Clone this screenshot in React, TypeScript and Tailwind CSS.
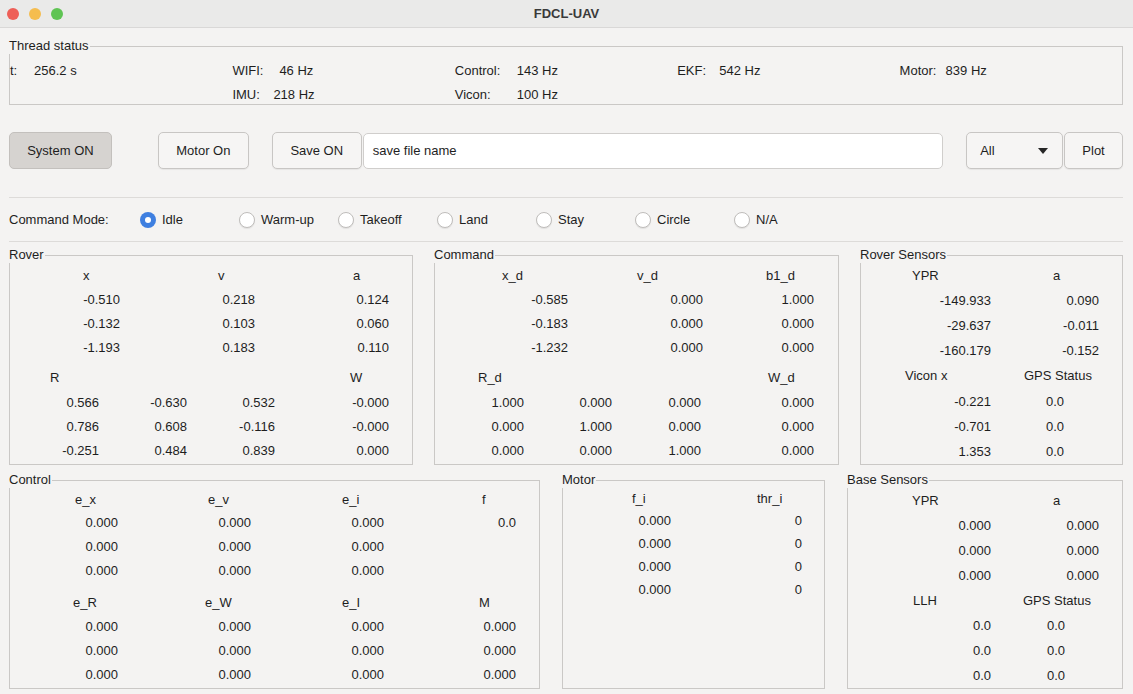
import React from 'react';

type Cell = [string, string];

function Row({ h, className = '', cells }: { h: string; className?: string; cells: Cell[] }) {
  return (
    <div className={`flex items-center ${h} ${className}`}>
      {cells.map(([c, t], i) => (
        <span key={i} className={c}>
          {t}
        </span>
      ))}
    </div>
  );
}

function Group({ title, className, children }: { title: string; className: string; children?: React.ReactNode }) {
  return (
    <fieldset className={`border border-[#cac8c6] min-w-0 ${className}`}>
      <legend className="text-[13px] leading-[16px] -ml-[1px] pr-[1px]">{title}</legend>
      <div className="pt-[1px]">{children}</div>
    </fieldset>
  );
}

function Radio({ label, checked }: { label: string; checked?: boolean }) {
  return (
    <div className="w-[99px] flex items-center gap-[6px]">
      {checked ? (
        <span className="w-[16px] h-[16px] rounded-full bg-[#3e7fe0] flex items-center justify-center">
          <span className="w-[6px] h-[6px] rounded-full bg-white" />
        </span>
      ) : (
        <span className="w-[16px] h-[16px] rounded-full bg-white border border-[#bfbdbb] shadow-[0_1px_1px_rgba(0,0,0,0.08)]" />
      )}
      <span>{label}</span>
    </div>
  );
}

const btn =
  'h-[37px] rounded-[5px] border border-[#c8c6c4] bg-[#f6f5f4] shadow-[0_1px_1px_rgba(0,0,0,0.06)] flex items-center justify-center';

export default function App() {
  return (
    <div className="w-[1133px] h-[694px] overflow-hidden bg-[#f4f3f2] text-[#1e1e1e] text-[13px] font-['Liberation_Sans',Arial,sans-serif]">
      {/* title bar */}
      <div className="h-[28px] grid grid-cols-[1fr_auto_1fr] items-center bg-[#eaeae9] border-b border-[#d9d8d7]">
        <div className="flex items-center gap-[10px] pl-[7px]">
          <span className="w-[12px] h-[12px] rounded-full bg-[#ee5f57]" />
          <span className="w-[12px] h-[12px] rounded-full bg-[#f5bd4f]" />
          <span className="w-[12px] h-[12px] rounded-full bg-[#5fc453]" />
        </div>
        <div className="font-bold text-[#3a3a3a]">FDCL-UAV</div>
        <div />
      </div>

      <div className="pl-[9px] pr-[10px] pt-[10px]">
        {/* thread status */}
        <Group title="Thread status" className="w-full">
          <div className="grid grid-cols-5 auto-rows-[18px] gap-y-[6px] pt-[7px] items-center">
            <div className="flex"><span className="w-[24px]">t:</span><span>256.2 s</span></div>
            <div className="flex"><span className="w-[41px]">WIFI:</span><span className="pl-[6px]">46 Hz</span></div>
            <div className="flex"><span className="w-[62px]">Control:</span><span>143 Hz</span></div>
            <div className="flex"><span className="w-[42px]">EKF:</span><span>542 Hz</span></div>
            <div className="flex"><span className="w-[46px]">Motor:</span><span>839 Hz</span></div>
            <div />
            <div className="flex"><span className="w-[41px]">IMU:</span><span>218 Hz</span></div>
            <div className="flex"><span className="w-[62px]">Vicon:</span><span>100 Hz</span></div>
            <div />
            <div />
          </div>
        </Group>

        {/* buttons */}
        <div className="mt-[27px] flex items-center">
          <div className="w-[103px] h-[37px] rounded-[5px] border border-[#c3c0bd] bg-[#d6d3d0] flex items-center justify-center">
            System ON
          </div>
          <div className={`${btn} w-[91px] ml-[46px]`}>Motor On</div>
          <div className={`${btn} w-[90px] ml-[23px]`}>Save ON</div>
          <div className="ml-[1px] w-[581px] h-[36px] rounded-[5px] border border-[#d0cecc] bg-white flex items-center pl-[9px]">
            save file name
          </div>
          <div className={`${btn} w-[97px] ml-[23px] !justify-between pl-[13px] pr-[14px]`}>
            <span>All</span>
            <svg width="10" height="6" viewBox="0 0 10 6">
              <path d="M0 0h10L5 6z" fill="#262626" />
            </svg>
          </div>
          <div className={`${btn} w-[59px] ml-[1px]`}>Plot</div>
        </div>

        <div className="mt-[28px] border-t border-[#dddbd9]" />

        {/* command mode */}
        <div className="h-[43px] flex items-center">
          <span className="w-[131px]">Command Mode:</span>
          <Radio label="Idle" checked />
          <Radio label="Warm-up" />
          <Radio label="Takeoff" />
          <Radio label="Land" />
          <Radio label="Stay" />
          <Radio label="Circle" />
          <Radio label="N/A" />
        </div>

        <div className="border-t border-[#dddbd9]" />

        {/* row 1 */}
        <div className="mt-[5px] flex items-stretch gap-[21px]">
          <Group title="Rover" className="w-[404px]">
            <Row h="h-[24px]" className="pl-[73px]" cells={[['w-[135px]', 'x'], ['w-[135px]', 'v'], ['', 'a']]} />
            <Row h="h-[24px]" cells={[['w-[110px] text-right', '-0.510'], ['w-[135px] text-right', '0.218'], ['w-[134px] text-right', '0.124']]} />
            <Row h="h-[24px]" cells={[['w-[110px] text-right', '-0.132'], ['w-[135px] text-right', '0.103'], ['w-[134px] text-right', '0.060']]} />
            <Row h="h-[24px]" cells={[['w-[110px] text-right', '-1.193'], ['w-[135px] text-right', '0.183'], ['w-[134px] text-right', '0.110']]} />
            <Row h="h-[24px]" className="mt-[6px] pl-[40px]" cells={[['w-[300px]', 'R'], ['', 'W']]} />
            <Row h="h-[24px]" className="mt-[1px]" cells={[['w-[89px] text-right', '0.566'], ['w-[88px] text-right', '-0.630'], ['w-[88px] text-right', '0.532'], ['w-[114px] text-right', '-0.000']]} />
            <Row h="h-[24px]" cells={[['w-[89px] text-right', '0.786'], ['w-[88px] text-right', '0.608'], ['w-[88px] text-right', '-0.116'], ['w-[114px] text-right', '-0.000']]} />
            <Row h="h-[24px]" cells={[['w-[89px] text-right', '-0.251'], ['w-[88px] text-right', '0.484'], ['w-[88px] text-right', '0.839'], ['w-[114px] text-right', '0.000']]} />
          </Group>

          <Group title="Command" className="w-[405px]">
            <Row h="h-[24px]" className="pl-[67px]" cells={[['w-[135px]', 'x_d'], ['w-[129px]', 'v_d'], ['', 'b1_d']]} />
            <Row h="h-[24px]" cells={[['w-[133px] text-right', '-0.585'], ['w-[135px] text-right', '0.000'], ['w-[111px] text-right', '1.000']]} />
            <Row h="h-[24px]" cells={[['w-[133px] text-right', '-0.183'], ['w-[135px] text-right', '0.000'], ['w-[111px] text-right', '0.000']]} />
            <Row h="h-[24px]" cells={[['w-[133px] text-right', '-1.232'], ['w-[135px] text-right', '0.000'], ['w-[111px] text-right', '0.000']]} />
            <Row h="h-[24px]" className="mt-[6px] pl-[43px]" cells={[['w-[290px]', 'R_d'], ['', 'W_d']]} />
            <Row h="h-[24px]" className="mt-[1px]" cells={[['w-[89px] text-right', '1.000'], ['w-[88px] text-right', '0.000'], ['w-[89px] text-right', '0.000'], ['w-[113px] text-right', '0.000']]} />
            <Row h="h-[24px]" cells={[['w-[89px] text-right', '0.000'], ['w-[88px] text-right', '1.000'], ['w-[89px] text-right', '0.000'], ['w-[113px] text-right', '0.000']]} />
            <Row h="h-[24px]" cells={[['w-[89px] text-right', '0.000'], ['w-[88px] text-right', '0.000'], ['w-[89px] text-right', '1.000'], ['w-[113px] text-right', '0.000']]} />
          </Group>

          <Group title="Rover Sensors" className="flex-1">
            <Row h="h-[24px]" className="pl-[51px]" cells={[['w-[141px]', 'YPR'], ['', 'a']]} />
            <Row h="h-[25px]" cells={[['w-[130px] text-right', '-149.933'], ['w-[108px] text-right', '0.090']]} />
            <Row h="h-[25px]" cells={[['w-[130px] text-right', '-29.637'], ['w-[108px] text-right', '-0.011']]} />
            <Row h="h-[25px]" cells={[['w-[130px] text-right', '-160.179'], ['w-[108px] text-right', '-0.152']]} />
            <Row h="h-[26px]" className="pl-[44px]" cells={[['w-[119px]', 'Vicon x'], ['', 'GPS Status']]} />
            <Row h="h-[25px]" cells={[['w-[130px] text-right', '-0.221'], ['pl-[55px]', '0.0']]} />
            <Row h="h-[25px]" cells={[['w-[130px] text-right', '-0.701'], ['pl-[55px]', '0.0']]} />
            <Row h="h-[25px]" cells={[['w-[130px] text-right', '1.353'], ['pl-[55px]', '0.0']]} />
          </Group>
        </div>

        {/* row 2 */}
        <div className="mt-[7px] flex items-stretch">
          <Group title="Control" className="w-[531px]">
            <Row h="h-[22px]" className="pl-[65px]" cells={[['w-[133px]', 'e_x'], ['w-[134px]', 'e_v'], ['w-[140px]', 'e_i'], ['', 'f']]} />
            <Row h="h-[24px]" cells={[['w-[108px] text-right', '0.000'], ['w-[133px] text-right', '0.000'], ['w-[133px] text-right', '0.000'], ['w-[132px] text-right', '0.0']]} />
            <Row h="h-[24px]" cells={[['w-[108px] text-right', '0.000'], ['w-[133px] text-right', '0.000'], ['w-[133px] text-right', '0.000']]} />
            <Row h="h-[24px]" cells={[['w-[108px] text-right', '0.000'], ['w-[133px] text-right', '0.000'], ['w-[133px] text-right', '0.000']]} />
            <Row h="h-[24px]" className="mt-[8px] pl-[63px]" cells={[['w-[132px]', 'e_R'], ['w-[137px]', 'e_W'], ['w-[137px]', 'e_I'], ['', 'M']]} />
            <Row h="h-[24px]" cells={[['w-[108px] text-right', '0.000'], ['w-[133px] text-right', '0.000'], ['w-[133px] text-right', '0.000'], ['w-[132px] text-right', '0.000']]} />
            <Row h="h-[24px]" cells={[['w-[108px] text-right', '0.000'], ['w-[133px] text-right', '0.000'], ['w-[133px] text-right', '0.000'], ['w-[132px] text-right', '0.000']]} />
            <Row h="h-[24px]" cells={[['w-[108px] text-right', '0.000'], ['w-[133px] text-right', '0.000'], ['w-[133px] text-right', '0.000'], ['w-[132px] text-right', '0.000']]} />
          </Group>

          <Group title="Motor" className="w-[263px] ml-[22px]">
            <Row h="h-[20px]" className="pl-[69px]" cells={[['w-[125px]', 'f_i'], ['', 'thr_i']]} />
            <Row h="h-[23px]" cells={[['w-[108px] text-right', '0.000'], ['w-[131px] text-right', '0']]} />
            <Row h="h-[23px]" cells={[['w-[108px] text-right', '0.000'], ['w-[131px] text-right', '0']]} />
            <Row h="h-[23px]" cells={[['w-[108px] text-right', '0.000'], ['w-[131px] text-right', '0']]} />
            <Row h="h-[23px]" cells={[['w-[108px] text-right', '0.000'], ['w-[131px] text-right', '0']]} />
          </Group>

          <Group title="Base Sensors" className="flex-1 ml-[22px]">
            <Row h="h-[24px]" className="pl-[64px]" cells={[['w-[141px]', 'YPR'], ['', 'a']]} />
            <Row h="h-[25px]" cells={[['w-[143px] text-right', '0.000'], ['w-[108px] text-right', '0.000']]} />
            <Row h="h-[25px]" cells={[['w-[143px] text-right', '0.000'], ['w-[108px] text-right', '0.000']]} />
            <Row h="h-[25px]" cells={[['w-[143px] text-right', '0.000'], ['w-[108px] text-right', '0.000']]} />
            <Row h="h-[25px]" className="pl-[65px]" cells={[['w-[110px]', 'LLH'], ['', 'GPS Status']]} />
            <Row h="h-[25px]" cells={[['w-[143px] text-right', '0.0'], ['pl-[56px]', '0.0']]} />
            <Row h="h-[25px]" cells={[['w-[143px] text-right', '0.0'], ['pl-[56px]', '0.0']]} />
            <Row h="h-[25px]" cells={[['w-[143px] text-right', '0.0'], ['pl-[56px]', '0.0']]} />
          </Group>
        </div>
      </div>
    </div>
  );
}
